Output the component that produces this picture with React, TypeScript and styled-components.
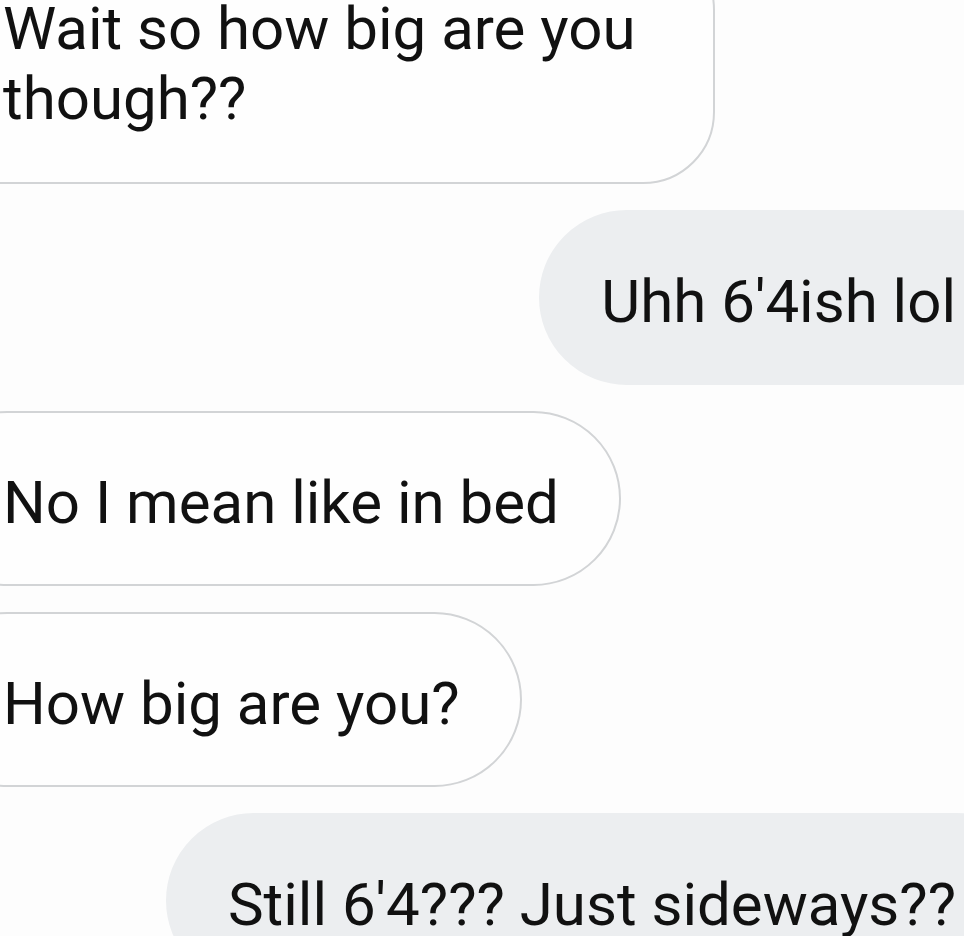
import styled, { createGlobalStyle } from "styled-components";

const GlobalStyle = createGlobalStyle`
  html, body {
    margin: 0;
    padding: 0;
    background: #fdfdfd;
    overflow: hidden;
  }
`;

const Thread = styled.div`
  width: 964px;
  height: 936px;
  overflow: hidden;
  display: flex;
  flex-direction: column;
  gap: 26px;
  font-family: Roboto, "Noto Sans", sans-serif;
  font-size: 60px;
  line-height: 70px;
  color: #111;
`;

const Bubble = styled.div<{ $mine?: boolean; $maxWidth?: number; $radius?: number }>`
  box-sizing: border-box;
  padding-top: 55px;
  padding-bottom: 46px;
  border-radius: ${(p) => p.$radius ?? 88}px;
  white-space: ${(p) => (p.$maxWidth ? "normal" : "nowrap")};
  max-width: ${(p) => (p.$maxWidth ? `${p.$maxWidth}px` : "none")};
  ${(p) =>
    p.$mine
      ? `
    align-self: flex-end;
    background: #eceef0;
    border: 2px solid #eceef0;
    margin-right: -80px;
    padding-left: 60px;
    padding-right: 86px;
  `
      : `
    align-self: flex-start;
    background: #fefefe;
    border: 2px solid #d2d4d6;
    margin-left: -80px;
    padding-left: 81px;
    padding-right: 60px;
  `}
`;

const FirstBubble = styled(Bubble)`
  margin-top: -62px;
  padding-top: 54px;
  padding-bottom: 48px;
`;

const messages = [
  { text: "Uhh 6'4ish lol", mine: true },
  { text: "No I mean like in bed", mine: false },
  { text: "How big are you?", mine: false },
  { text: "Still 6'4??? Just sideways??", mine: true },
];

export default function App() {
  return (
    <>
      <GlobalStyle />
      <Thread>
        <FirstBubble $maxWidth={795} $radius={72}>
          Wait so how big are you though??
        </FirstBubble>
        {messages.map((m, i) => (
          <Bubble key={i} $mine={m.mine}>
            {m.text}
          </Bubble>
        ))}
      </Thread>
    </>
  );
}
